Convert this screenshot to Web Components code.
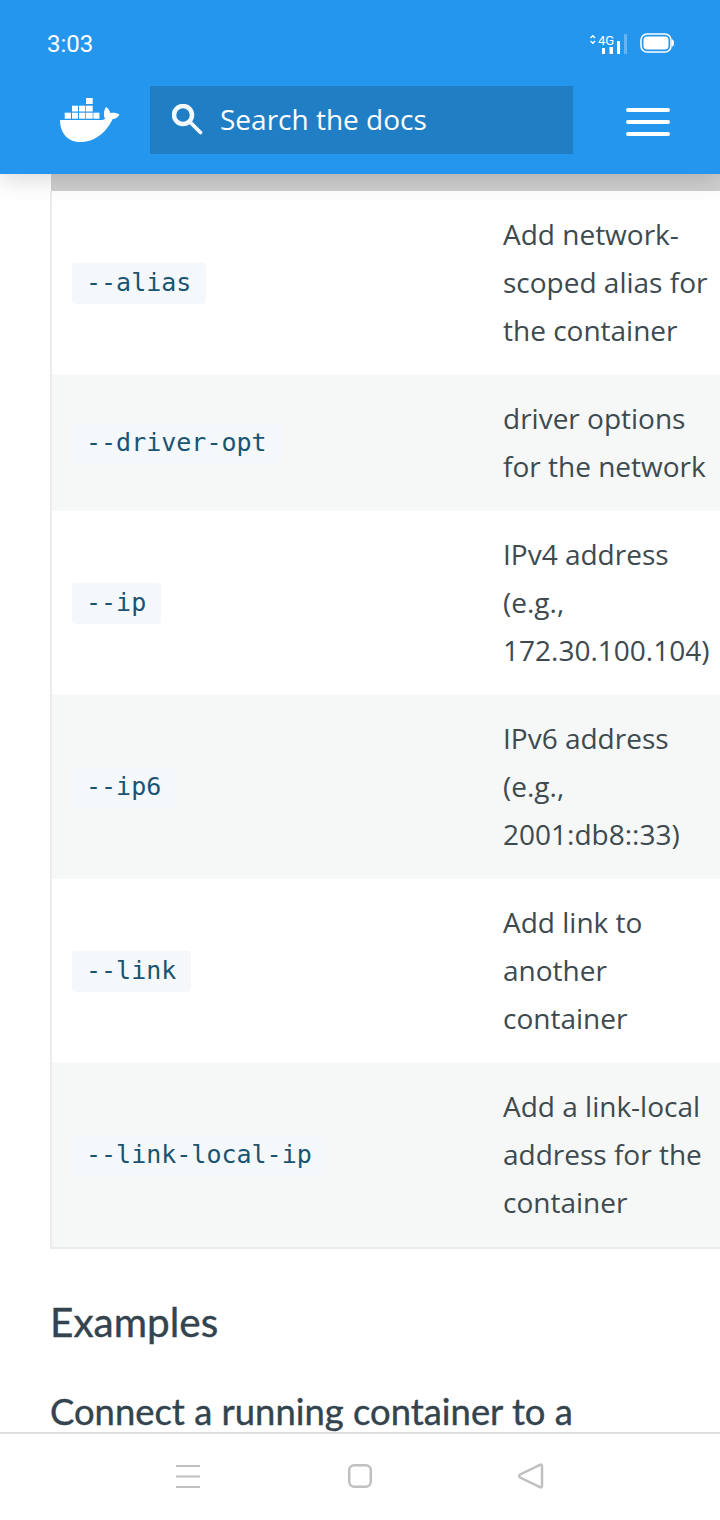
<!DOCTYPE html>
<html>
<head>
<meta charset="utf-8">
<style>
  html, body { margin: 0; padding: 0; background: #fff; }
  body { font-family: "Open Sans", sans-serif; }
</style>
</head>
<body>
<docs-page>
  <docs-header slot="header"></docs-header>
  <docs-table>
    <option-row name="--alias">Add network-<br>scoped alias for<br>the container</option-row>
    <option-row name="--driver-opt" striped>driver options<br>for the network</option-row>
    <option-row name="--ip">IPv4 address<br>(e.g.,<br>172.30.100.104)</option-row>
    <option-row name="--ip6" striped>IPv6 address<br>(e.g.,<br>2001:db8::33)</option-row>
    <option-row name="--link">Add link to<br>another<br>container</option-row>
    <option-row name="--link-local-ip" striped>Add a link-local<br>address for the<br>container</option-row>
  </docs-table>
  <docs-section></docs-section>
  <nav-bar slot="nav"></nav-bar>
</docs-page>

<script>
class DocsPage extends HTMLElement {
    constructor() {
        super();
        this.attachShadow({mode: "open"}).innerHTML = `
        <style>
          :host { display: flex; flex-direction: column; width: 720px; height: 1520px; overflow: hidden; }
          main { flex: 1; min-height: 0; overflow: hidden; }
        </style>
        <slot name="header"></slot>
        <main><slot></slot></main>
        <slot name="nav"></slot>`;
    }
}

class DocsHeader extends HTMLElement {
    constructor() {
        super();
        this.attachShadow({mode: "open"}).innerHTML = `
        <style>
          :host {
            display: block; height: 174px; background: #2496ed; color: #fff;
            position: relative; z-index: 2;
            box-shadow: 0 4px 24px rgba(0,0,0,.17);
          }
          .status { height: 86px; display: flex; align-items: center; justify-content: space-between; padding: 0 46px 0 47px; }
          .time { font: 400 24px "Roboto", sans-serif; padding-top: 2px; }
          .icons { display: flex; align-items: center; gap: 12px; }
          .bar { height: 88px; display: flex; align-items: flex-start; padding-left: 60px; }
          .bar > svg.logo { width: 60px; height: 46px; margin: 12px 30px 0 0; flex: none; }
          .search {
            width: 423px; height: 68px; background: #207ec5; display: flex; align-items: center;
            padding-left: 22px; box-sizing: border-box;
            font-size: 28px;
          }
          .search svg { width: 32px; height: 32px; margin-right: 16px; }
          .search span { padding-bottom: 2px; }
          .menu { width: 44px; margin: 22px 0 0 53px; display: flex; flex-direction: column; gap: 8px; }
          .menu i { display: block; height: 4px; border-radius: 2px; background: #fff; }
        </style>
        <div class="status">
          <span class="time">3:03</span>
          <div class="icons">
            <svg width="38" height="22" viewBox="0 0 38 22">
              <path d="M.5 6 2.800 3.800 5 6M.5 9 2.800 11.200 5 9" fill="none" stroke="#fff" stroke-width="1.4"/>
              <text x="8" y="13" font-family="Roboto, sans-serif" font-size="13" fill="#fff">4G</text>
              <rect x="12" y="16" width="3" height="6" rx=".5" fill="#fff"/>
              <rect x="19.500" y="15" width="3.500" height="7" rx=".5" fill="#fff"/>
              <rect x="27" y="9" width="3" height="13" rx=".5" fill="#fff"/>
              <rect x="34" y="2" width="3" height="20" rx=".5" fill="#fff" opacity=".3"/>
            </svg>
            <svg width="34" height="20" viewBox="0 0 34 20">
              <rect x="1" y="1" width="30" height="18" rx="6" fill="none" stroke="#fff" stroke-width="1.6"/>
              <rect x="3.500" y="3.500" width="25" height="13" rx="3.500" fill="#fff"/>
              <path d="M32.600 7.500c1 .8 1 4.200 0 5z" fill="none" stroke="#fff" stroke-width="1.400"/>
            </svg>
          </div>
        </div>
        <div class="bar">
          <svg class="logo" viewBox="0 0 60 46">
            <g fill="#fff">
              <rect x="26" y="0" width="6.700" height="6"/>
              <rect x="12" y="7.700" width="6" height="5.800"/><rect x="19" y="7.700" width="6.300" height="5.800"/><rect x="26" y="7.700" width="6.700" height="5.800"/>
              <rect x="4.700" y="14.700" width="6.300" height="6"/><rect x="12" y="14.700" width="6" height="6"/><rect x="19" y="14.700" width="6.300" height="6"/><rect x="26" y="14.700" width="6.700" height="6"/><rect x="33.400" y="14.700" width="6" height="6"/>
              <path d="M0 22H40.500C42.500 22 44.500 21.500 45 20.500 43.500 18 43.500 12.500 46 9 48.500 10.500 50 13 50 15 53 14.500 56.500 14.500 59.500 16.500 58 19.500 55 21 52.500 21.200 47 33 36 44 20 44 7 44 0 34 0 22Z"/>
            </g>
          </svg>
          <div class="search">
            <svg viewBox="0 0 32 32"><circle cx="11" cy="11" r="9" fill="none" stroke="#f4f9fd" stroke-width="4.500"/><path d="M17.500 17.500 28.500 28.500" stroke="#f4f9fd" stroke-width="3.800" stroke-linecap="round"/></svg>
            <span>Search the docs</span>
          </div>
          <div class="menu"><i></i><i></i><i></i></div>
        </div>`;
    }
}

class DocsTable extends HTMLElement {
    constructor() {
        super();
        this.attachShadow({mode: "open"}).innerHTML = `
        <style>
          :host { display: block; margin-left: 50px; }
          .head { height: 17px; margin-left: 1px; background: #cfcfcf; }
          .rows { border-left: 2px solid #ececec; border-bottom: 2px solid #ececec; }
        </style>
        <div class="head"></div>
        <div class="rows"><slot></slot></div>`;
    }
}

class OptionRow extends HTMLElement {
    constructor() {
        super();
        this.attachShadow({mode: "open"}).innerHTML = `
        <style>
          :host { display: grid; grid-template-columns: 451px 1fr; align-items: center; background: #fff; color: #3d4a50; }
          :host([striped]) { background: #f6f7f7; }
          code {
            justify-self: start; margin-left: 20px; padding: 0 15px 0 14px; height: 41px; box-sizing: border-box;
            background: #f4f8fb; border-radius: 4px; color: #1a5472;
            font: 25px/39px "DejaVu Sans Mono", monospace; white-space: nowrap;
          }
          .text { padding: 19px 0 21px; font-size: 28px; line-height: 48px; white-space: nowrap; }
        </style>
        <code></code>
        <div class="text"><slot></slot></div>`;
    }

    connectedCallback() {
        this.shadowRoot.querySelector('code').textContent = this.getAttribute('name');
    }
}

class DocsSection extends HTMLElement {
    constructor() {
        super();
        this.attachShadow({mode: "open"}).innerHTML = `
        <style>
          :host { display: block; padding-left: 50px; color: #33444e; font-family: "Lato", sans-serif; -webkit-text-stroke: .4px #33444e; }
          h2 { margin: 47px 0 0; font-size: 40.5px; line-height: 52px; font-weight: 400; }
          h3 { margin: 39px 0 0; font-size: 36.4px; line-height: 48px; font-weight: 400; white-space: nowrap; }
        </style>
        <h2>Examples</h2>
        <h3>Connect a running container to a</h3>`;
    }
}

class NavBar extends HTMLElement {
    constructor() {
        super();
        this.attachShadow({mode: "open"}).innerHTML = `
        <style>
          :host {
            display: flex; align-items: center; height: 88px; box-sizing: border-box; background: #fff;
            border-top: 2px solid #dedfe0; position: relative; z-index: 1;
            padding: 0 176px 2px; justify-content: space-between;
          }
          svg { width: 26px; height: 26px; fill: none; stroke: #c0c0c0; }
        </style>
        <svg viewBox="0 0 26 26" stroke-width="2"><path d="M0 3h24M0 13.500h24M0 24h24"/></svg>
        <svg viewBox="0 0 26 26" stroke-width="2.500"><rect x="2.250" y="2.250" width="21.500" height="21.500" rx="5"/></svg>
        <svg viewBox="0 0 26 26" stroke-width="2.500"><path d="M24 3V23c0 1-1 1.700-2 1.200L2 14.500c-1-.6-1-2.400 0-3L22 1.800c1-.5 2 .2 2 1.200z"/></svg>`;
    }
}

window.customElements.define('docs-page', DocsPage);
window.customElements.define('docs-header', DocsHeader);
window.customElements.define('docs-table', DocsTable);
window.customElements.define('option-row', OptionRow);
window.customElements.define('docs-section', DocsSection);
window.customElements.define('nav-bar', NavBar);
</script>
</body>
</html>
